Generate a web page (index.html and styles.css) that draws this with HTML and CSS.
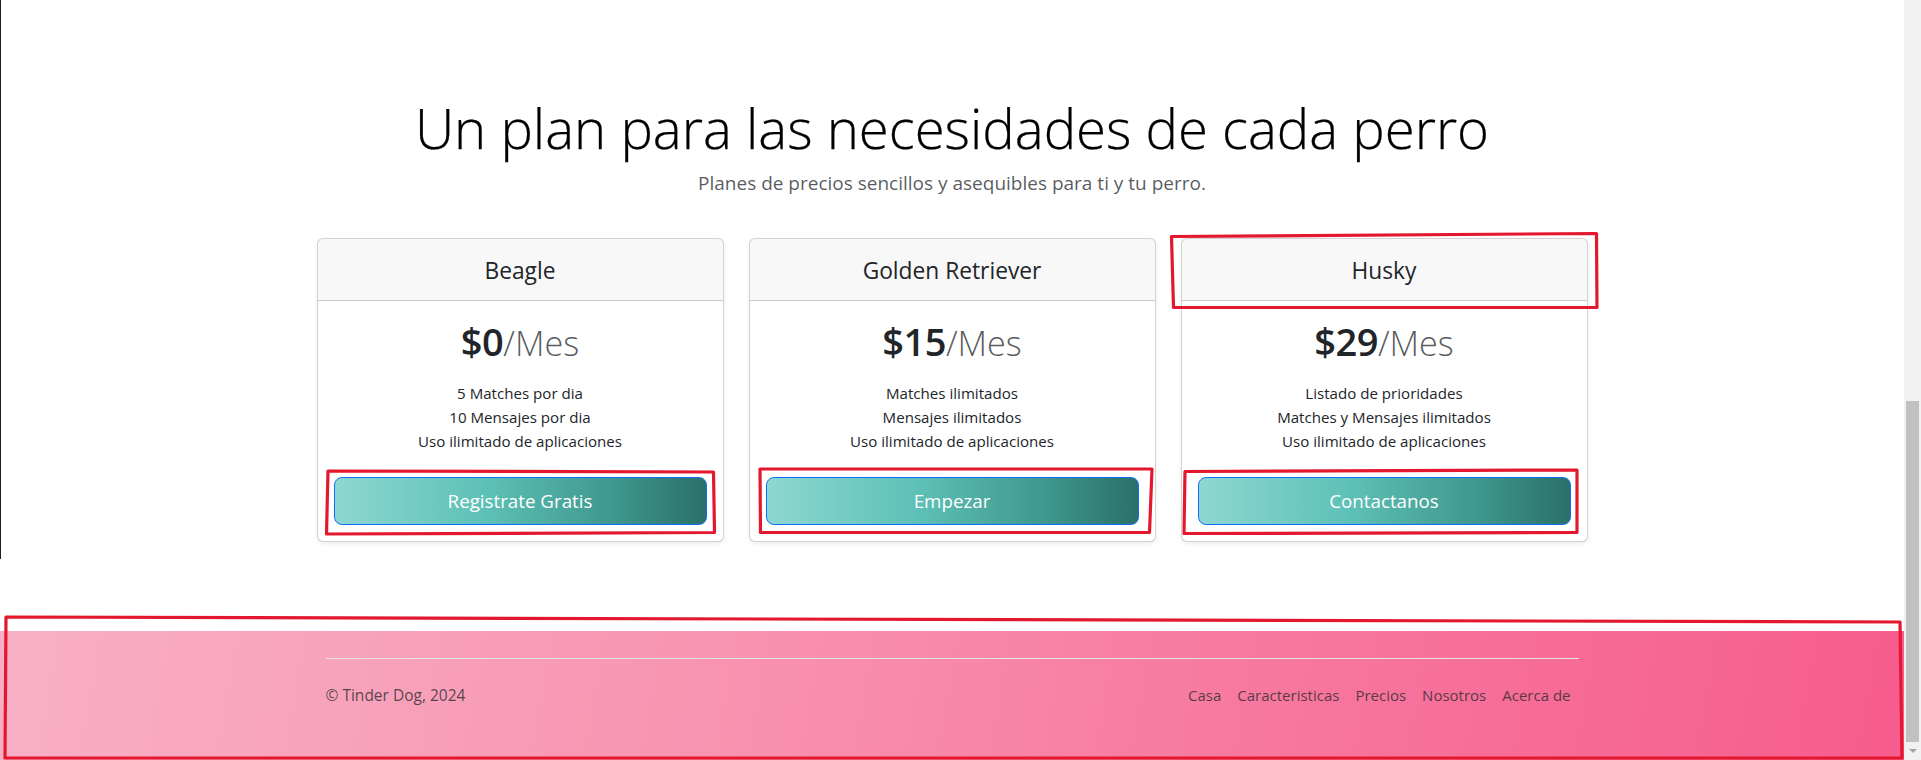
FILE: index.html
```html
<!DOCTYPE html>
<html lang="es">
<head>
<meta charset="utf-8">
<title>Tinder Dog - Precios</title>
<link rel="stylesheet" href="styles.css">
</head>
<body>
<div class="window">
  <main class="page">
    <section class="pricing">
      <header class="pricing-header">
        <h1>Un plan para las necesidades de cada perro</h1>
        <p>Planes de precios sencillos y asequibles para ti y tu perro.</p>
      </header>
      <div class="plans">
        <div class="card">
          <div class="card-header"><h4>Beagle</h4></div>
          <div class="card-body">
            <h2 class="price">$0<small>/Mes</small></h2>
            <ul class="features">
              <li>5 Matches por dia</li>
              <li>10 Mensajes por dia</li>
              <li>Uso ilimitado de aplicaciones</li>
            </ul>
            <button class="btn" type="button">Registrate Gratis</button>
          </div>
        </div>
        <div class="card">
          <div class="card-header"><h4>Golden Retriever</h4></div>
          <div class="card-body">
            <h2 class="price">$15<small>/Mes</small></h2>
            <ul class="features">
              <li>Matches ilimitados</li>
              <li>Mensajes ilimitados</li>
              <li>Uso ilimitado de aplicaciones</li>
            </ul>
            <button class="btn" type="button">Empezar</button>
          </div>
        </div>
        <div class="card">
          <div class="card-header"><h4>Husky</h4></div>
          <div class="card-body">
            <h2 class="price">$29<small>/Mes</small></h2>
            <ul class="features">
              <li>Listado de prioridades</li>
              <li>Matches y Mensajes ilimitados</li>
              <li>Uso ilimitado de aplicaciones</li>
            </ul>
            <button class="btn" type="button">Contactanos</button>
          </div>
        </div>
      </div>
    </section>
    <footer class="footer">
      <div class="footer-inner">
        <p class="copy">© Tinder Dog, 2024</p>
        <ul class="footer-nav">
          <li><a href="#">Casa</a></li>
          <li><a href="#">Caracteristicas</a></li>
          <li><a href="#">Precios</a></li>
          <li><a href="#">Nosotros</a></li>
          <li><a href="#">Acerca de</a></li>
        </ul>
      </div>
    </footer>
  </main>
  <div class="scrollbar">
    <div class="thumb"></div>
    <div class="arrow"></div>
  </div>
</div>
<svg class="annotations" width="1921" height="760" viewBox="0 0 1921 760" xmlns="http://www.w3.org/2000/svg">
  <g fill="none" stroke="#e3182f" stroke-width="3.2" stroke-linejoin="round">
    <polygon points="1171.5,236.5 1596.5,233.5 1597,307.5 1173.5,307.5"/>
    <polygon points="328,471 713.5,472 714.5,532.5 326.5,534"/>
    <polygon points="760,469 1152,469 1149.5,532.5 760.5,532.5"/>
    <polygon points="1185,471.5 1577,470 1577,532.5 1184,533.5"/>
    <polygon points="6,617 1900,622 1902,758 5,758"/>
  </g>
</svg>
</body>
</html>
```
FILE: styles.css
```css
* { box-sizing: border-box; }

body {
  margin: 0;
  width: 1921px;
  height: 760px;
  overflow: hidden;
  position: relative;
  font-family: "Open Sans", "Noto Sans", sans-serif;
  color: #212529;
  background: #fff;
}

.window {
  display: flex;
  height: 760px;
}

.page {
  width: 1904px;
  display: flex;
  flex-direction: column;
}

.pricing {
  height: 559px;
  padding-top: 95px;
  box-shadow: inset 1px 0 0 #1e1e1e;
}

.pricing-header {
  text-align: center;
}

.pricing-header h1 {
  margin: 0;
  font-size: 54.5px;
  font-weight: 300;
  line-height: 67px;
  color: #000;
  -webkit-text-stroke: 0.25px #000;
}

.pricing-header p {
  margin: 6px 0 0;
  font-size: 19px;
  line-height: 30px;
  font-weight: 400;
  color: rgba(33, 37, 41, 0.75);
}

.plans {
  display: grid;
  grid-template-columns: repeat(3, 407px);
  gap: 25px;
  width: 1271px;
  margin: 40px auto 0;
}

.card {
  border: 1px solid rgba(0, 0, 0, 0.175);
  border-radius: 6px;
  box-shadow: 0 2px 4px rgba(0, 0, 0, 0.075);
  background: #fff;
  overflow: hidden;
  text-align: center;
}

.card-header {
  background: rgba(33, 37, 41, 0.03);
  border-bottom: 1px solid rgba(0, 0, 0, 0.175);
  padding: 18px 16px 14px;
}

.card-header h4 {
  margin: 0;
  font-size: 22.75px;
  font-weight: 400;
  line-height: 28.8px;
}

.card-body {
  padding: 16px;
}

.price {
  margin: 0 0 16px;
  height: 48px;
  font-size: 38px;
  letter-spacing: -0.5px;
  font-weight: 600;
  line-height: 48px;
}

.price small {
  font-size: 0.9em;
  font-weight: 300;
  letter-spacing: 0;
  line-height: 1;
  color: rgba(33, 37, 41, 0.75);
}

.features {
  list-style: none;
  margin: 0 0 24px;
  padding: 0;
  font-size: 15.1px;
  line-height: 24px;
}

.btn {
  display: block;
  width: 100%;
  padding: 8px 16px;
  font-family: inherit;
  font-size: 18.75px;
  line-height: 30px;
  color: #fff;
  border: 1px solid #0d6efd;
  border-radius: 8px;
  background: linear-gradient(to right, #8ed8d0 0%, #5ec1b7 40%, #3f978d 75%, #2a7068 100%);
  cursor: pointer;
}

.footer {
  margin-top: 72px;
  height: 129px;
  padding-top: 27px;
  background: linear-gradient(100deg, #f8b0c6 0%, #f896b2 35%, #f779a0 65%, #f65c8d 100%);
}

.footer-inner {
  width: 1253px;
  margin: 0 auto;
  border-top: 1px solid #e4e4e6;
  padding-top: 24px;
  display: flex;
  justify-content: space-between;
}

.copy {
  margin: 0;
  font-size: 15.5px;
  line-height: 24px;
  color: rgba(33, 37, 41, 0.75);
}

.footer-nav {
  display: flex;
  list-style: none;
  margin: 0;
  padding: 0;
}

.footer-nav a {
  display: block;
  padding: 0 8px;
  font-size: 15px;
  line-height: 24px;
  color: rgba(33, 37, 41, 0.75);
  text-decoration: none;
}

.scrollbar {
  width: 17px;
  height: 760px;
  background: #f1f1f1;
  display: flex;
  flex-direction: column;
  justify-content: flex-end;
  align-items: center;
}

.thumb {
  width: 13px;
  height: 341px;
  background: #c1c1c1;
}

.arrow {
  height: 18px;
  width: 17px;
  display: flex;
  align-items: center;
  justify-content: center;
}

.arrow::before {
  content: "";
  border-left: 4px solid transparent;
  border-right: 4px solid transparent;
  border-top: 4px solid #a3a3a3;
}

.annotations {
  position: absolute;
  top: 0;
  left: 0;
  pointer-events: none;
}
```
